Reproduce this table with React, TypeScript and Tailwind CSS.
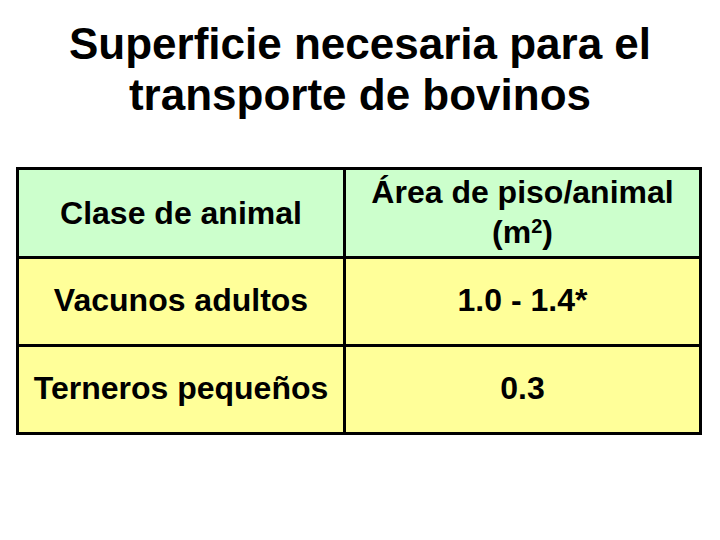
const rows = [
  { clase: "Vacunos adultos", area: "1.0 - 1.4*" },
  { clase: "Terneros pequeños", area: "0.3" },
];

const App = () => {
  return (
    <div
      className="w-[720px] h-[540px] bg-white text-black font-bold"
      style={{ fontFamily: '"Liberation Sans", Arial, sans-serif' }}
    >
      <h1 className="pt-[18px] text-center text-[44px] leading-[51px] font-bold">
        Superficie necesaria para el
        <br />
        transporte de bovinos
      </h1>
      <table className="ml-[16px] mt-[47px] border-collapse border-[3px] border-black text-[32px]">
        <tbody>
          <tr className="h-[89px] bg-[#ccffcc]">
            <td className="w-[327px] border-[3px] border-black text-center align-middle">
              Clase de animal
            </td>
            <td className="w-[356px] border-[3px] border-black pb-[3px] text-center align-middle leading-[40px]">
              Área de piso/animal
              <br />
              (m<sup className="text-[20px] font-bold">2</sup>)
            </td>
          </tr>
          {rows.map((row) => (
            <tr key={row.clase} className="h-[88px] bg-[#ffff99]">
              <td className="border-[3px] border-black pb-[3px] text-center align-middle">
                {row.clase}
              </td>
              <td className="border-[3px] border-black pb-[3px] text-center align-middle">
                {row.area}
              </td>
            </tr>
          ))}
        </tbody>
      </table>
    </div>
  );
};

export default App;
